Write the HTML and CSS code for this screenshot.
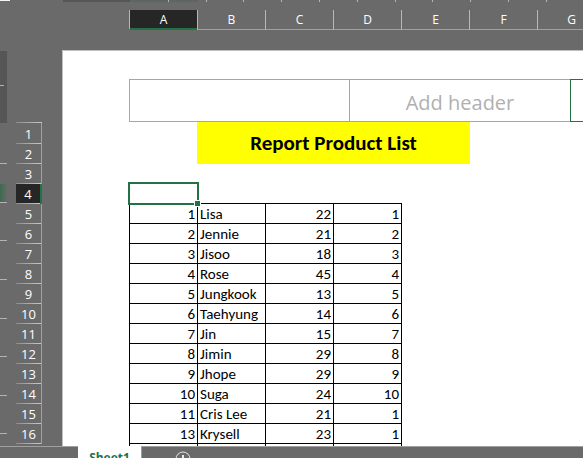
FILE: index.html
```html
<!DOCTYPE html>
<html lang="en">
<head>
<meta charset="utf-8">
<title>Report Product List</title>
<link rel="stylesheet" href="styles.css">
</head>
<body>
<svg class="top-ruler" height="2" aria-hidden="true">
  <path fill="#f4f4f4" d="M0 0h10v1H0z"/>
  <path fill="#565656" d="M63 0h67v2H63z"/>
  <path fill="#5b6861" d="M130 0h68v2h-68z"/>
  <path fill="#b4b4b4" d="M168 0h1v2h-1zM206 0h1v2h-1zM243 0h1v2h-1zM281 0h1v2h-1zM319 0h1v2h-1zM357 0h1v2h-1zM395 0h1v2h-1zM432 0h1v2h-1zM470 0h1v2h-1zM508 0h1v2h-1zM546 0h1v2h-1z"/>
</svg>
<div class="columns">
  <div class="column selected">A</div>
  <div class="column">B</div>
  <div class="column">C</div>
  <div class="column">D</div>
  <div class="column">E</div>
  <div class="column">F</div>
  <div class="column">G</div>
</div>
<main class="workspace">
  <svg class="side-ruler" width="7" height="396" aria-hidden="true">
    <defs>
      <linearGradient id="mark"><stop offset="0" stop-color="#3c6b50"/><stop offset="1" stop-color="#686868"/></linearGradient>
    </defs>
    <path fill="#565656" d="M0 1h7v72H0z"/>
    <path fill="url(#mark)" d="M0 134h7v18H0z"/>
    <path fill="#b4b4b4" d="M0 35h4v1H0zM0 113h7v1H0zM0 152h7v1H0zM0 190h7v1H0zM0 229h7v1H0zM0 268h7v1H0zM0 306h7v1H0zM0 345h7v1H0zM0 383h7v1H0z"/>
  </svg>
  <div class="rows">
    <div class="row">1</div>
    <div class="row">2</div>
    <div class="row">3</div>
    <div class="row selected">4</div>
    <div class="row">5</div>
    <div class="row">6</div>
    <div class="row">7</div>
    <div class="row">8</div>
    <div class="row">9</div>
    <div class="row">10</div>
    <div class="row">11</div>
    <div class="row">12</div>
    <div class="row">13</div>
    <div class="row">14</div>
    <div class="row">15</div>
    <div class="row">16</div>
  </div>
  <section class="page">
    <div class="header-boxes">
      <div class="header-box"></div>
      <div class="header-box center">Add header</div>
      <div class="header-box active"></div>
    </div>
    <h1 class="title">Report Product List</h1>
    <div class="grid">
      <div class="selection"><span class="handle"></span></div>
      <table class="data">
        <tbody>
          <tr><td>1</td><td>Lisa</td><td>22</td><td>1</td></tr>
          <tr><td>2</td><td>Jennie</td><td>21</td><td>2</td></tr>
          <tr><td>3</td><td>Jisoo</td><td>18</td><td>3</td></tr>
          <tr><td>4</td><td>Rose</td><td>45</td><td>4</td></tr>
          <tr><td>5</td><td>Jungkook</td><td>13</td><td>5</td></tr>
          <tr><td>6</td><td>Taehyung</td><td>14</td><td>6</td></tr>
          <tr><td>7</td><td>Jin</td><td>15</td><td>7</td></tr>
          <tr><td>8</td><td>Jimin</td><td>29</td><td>8</td></tr>
          <tr><td>9</td><td>Jhope</td><td>29</td><td>9</td></tr>
          <tr><td>10</td><td>Suga</td><td>24</td><td>10</td></tr>
          <tr><td>11</td><td>Cris Lee</td><td>21</td><td>1</td></tr>
          <tr><td>13</td><td>Krysell</td><td>23</td><td>1</td></tr>
          <tr><td></td><td></td><td></td><td></td></tr>
        </tbody>
      </table>
    </div>
  </section>
</main>
<footer class="tabs">
  <div class="tab-nav">
    <button class="nav" type="button" aria-label="Previous sheet"><svg width="8" height="10" viewBox="0 0 8 10"><path d="M6 1 2 5l4 4" fill="none" stroke="#999" stroke-width="2"/></svg></button>
    <button class="nav" type="button" aria-label="Next sheet"><svg width="8" height="10" viewBox="0 0 8 10"><path d="m2 1 4 4-4 4" fill="none" stroke="#999" stroke-width="2"/></svg></button>
  </div>
  <button class="tab" type="button">Sheet1</button>
  <div class="tab-rest">
    <button class="add" type="button" aria-label="New sheet"><svg width="16" height="16" viewBox="0 0 16 16"><path d="M8 4v8M4 8h8" stroke="#e8e8e8" stroke-width="2"/><circle cx="8" cy="8" r="7" fill="none" stroke="#e8e8e8"/></svg></button>
  </div>
</footer>
</body>
</html>
```
FILE: styles.css
```css
* {
  box-sizing: border-box;
}

body {
  margin: 0;
  height: 100vh;
  display: flex;
  flex-direction: column;
  overflow: hidden;
  background: #6a6a6a;
  font-family: "Open Sans", "Noto Sans", sans-serif;
}

button {
  padding: 0;
  border: 0;
  background: none;
  font: inherit;
}

svg {
  display: block;
  flex: none;
}

.top-ruler {
  width: 100%;
}

.columns {
  flex: none;
  display: flex;
  margin: 8px 0 20px 129px;
  overflow: hidden;
}

.column {
  flex: none;
  width: 68px;
  height: 20px;
  border-left: 1px solid #b8b8b8;
  border-bottom: 1px solid #a0a0a0;
  color: #fff;
  font-size: 12px;
  line-height: 20px;
  text-align: center;
}

.column.selected {
  border-bottom: 2px solid #217346;
  background: #262626;
}

.workspace {
  flex: 1;
  min-height: 0;
  display: grid;
  grid-template-columns: 7px 35px 1fr;
  overflow: hidden;
}

.rows {
  margin: 72px 0 0 9px;
  padding-top: 1px;
  background: linear-gradient(90deg, #8c8c8c, #c8c8c8) top / 100% 1px no-repeat;
}

.row {
  height: 20px;
  border-right: 1px solid #a0a0a0;
  background: linear-gradient(90deg, #8c8c8c, #c8c8c8) bottom / 100% 1px no-repeat;
  color: #fff;
  font-size: 13px;
  line-height: 20px;
  text-align: center;
}

.row:first-child {
  height: 21px;
  line-height: 22px;
}

.row.selected {
  border-right: 2px solid #217346;
  background-color: #262626;
}

.page {
  min-width: 0;
  margin-left: 20px;
  padding: 28px 0 0 66px;
  border-top: 1px solid #c0c0c0;
  border-left: 1px solid #c0c0c0;
  background: #fff;
  overflow: hidden;
}

.header-boxes {
  display: flex;
  height: 43px;
}

.header-box {
  flex: none;
  width: 220px;
  border: 1px solid #a6a6a6;
  border-right: 0;
  color: #b0b0b0;
  font-size: 20px;
  line-height: 46px;
  text-align: center;
}

.header-box.center {
  width: 221px;
}

.header-box.active {
  border-color: #217346;
}

.title {
  width: 273px;
  margin: 0 0 18px 68px;
  background: #ff0;
  color: #000;
  font-family: Carlito, "Open Sans", sans-serif;
  font-size: 21px;
  font-weight: 700;
  line-height: 42px;
  text-align: center;
}

.grid {
  margin-left: -1px;
}

.selection {
  position: relative;
  width: 71px;
  height: 23px;
  border: 2px solid #217346;
}

.handle {
  position: absolute;
  right: -4px;
  bottom: -4px;
  width: 7px;
  height: 7px;
  border: 1px solid #fff;
  background: #217346;
}

.data {
  width: 273px;
  margin: -2px 0 0 1px;
  table-layout: fixed;
  border-spacing: 0;
  border-top: 1px solid #000;
  border-left: 1px solid #000;
  color: #000;
  font-family: Carlito, "Open Sans", sans-serif;
  font-size: 15px;
  line-height: 17px;
}

.data td {
  height: 20px;
  padding: 2px 2px 0;
  border-right: 1px solid #000;
  border-bottom: 1px solid #000;
  text-align: right;
  white-space: nowrap;
}

.data td:nth-child(2) {
  text-align: left;
}

.tabs {
  flex: none;
  display: flex;
  height: 12px;
  overflow: hidden;
}

.tab-nav,
.tab-rest {
  height: 24px;
  border-top: 1px solid #a0a0a0;
}

.tab-nav {
  display: flex;
  justify-content: space-between;
  width: 78px;
  padding: 8px 40px 0 4px;
}

.nav,
.add {
  display: block;
  height: 16px;
}

.tab {
  width: 63px;
  height: 24px;
  background: #fff;
  color: #217346;
  font-size: 12px;
  font-weight: 700;
  line-height: 24px;
}

.tab-rest {
  flex: 1;
  padding: 4px 0 0 33px;
  border-left: 1px solid #a0a0a0;
}
```
